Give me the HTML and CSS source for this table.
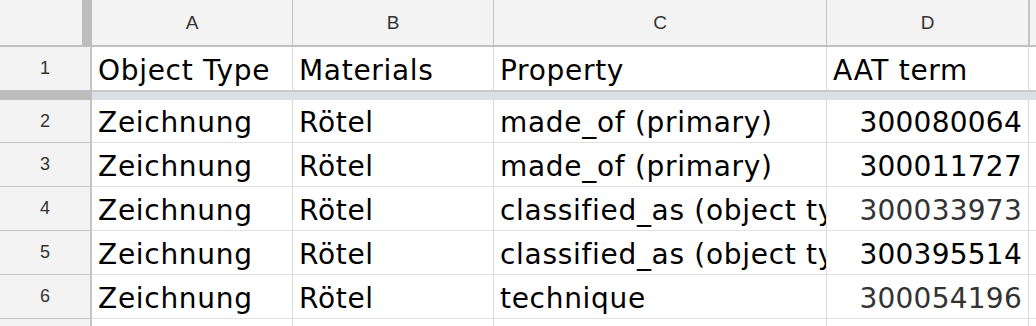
FILE: index.html
```html
<!DOCTYPE html>
<html>
<head>
<meta charset="utf-8">
<link rel="stylesheet" href="styles.css">
</head>
<body>
<div class="sheet">
  <div class="corner"></div>
  <div class="colhead">A</div>
  <div class="colhead">B</div>
  <div class="colhead">C</div>
  <div class="colhead">D</div>
  <div class="colhead colhead-rest"></div>

  <div class="rowhead rowhead-frozen">1</div>
  <div class="cell cell-frozen">Object Type</div>
  <div class="cell cell-frozen">Materials</div>
  <div class="cell cell-frozen">Property</div>
  <div class="cell cell-frozen">AAT term</div>
  <div class="cell cell-frozen cell-rest"></div>

  <div class="freeze-head"></div>
  <div class="freeze-bar"></div>

  <div class="rowhead">2</div>
  <div class="cell">Zeichnung</div>
  <div class="cell">Rötel</div>
  <div class="cell">made_of (primary)</div>
  <div class="cell num">300080064</div>
  <div class="cell cell-rest"></div>

  <div class="rowhead">3</div>
  <div class="cell">Zeichnung</div>
  <div class="cell">Rötel</div>
  <div class="cell">made_of (primary)</div>
  <div class="cell num">300011727</div>
  <div class="cell cell-rest"></div>

  <div class="rowhead">4</div>
  <div class="cell">Zeichnung</div>
  <div class="cell">Rötel</div>
  <div class="cell cell-clip"><span class="clip">classified_as (object type)</span></div>
  <div class="cell num num-muted">300033973</div>
  <div class="cell cell-rest"></div>

  <div class="rowhead">5</div>
  <div class="cell">Zeichnung</div>
  <div class="cell">Rötel</div>
  <div class="cell cell-clip"><span class="clip">classified_as (object type)</span></div>
  <div class="cell num">300395514</div>
  <div class="cell cell-rest"></div>

  <div class="rowhead">6</div>
  <div class="cell">Zeichnung</div>
  <div class="cell">Rötel</div>
  <div class="cell">technique</div>
  <div class="cell num num-muted">300054196</div>
  <div class="cell cell-rest"></div>

  <div class="rowhead"></div>
  <div class="cell"></div>
  <div class="cell"></div>
  <div class="cell"></div>
  <div class="cell"></div>
  <div class="cell cell-rest"></div>
</div>
</body>
</html>
```

FILE: styles.css
```css
html, body {
  margin: 0;
  padding: 0;
  background: #ffffff;
}

.sheet {
  width: 1036px;
  height: 326px;
  overflow: hidden;
  display: grid;
  grid-template-columns: 92px 201px 201px 333px 202px 1fr;
  grid-template-rows: 47px 43px 10px 43px 44px 44px 44px 44px 44px;
}

.sheet > div {
  box-sizing: border-box;
  min-width: 0;
}

.corner {
  background: #f3f3f3;
  border-right: 10px solid #bdbdbd;
  border-bottom: 2px solid #c0c0c0;
}

.colhead {
  background: #f3f3f3;
  border-right: 1px solid #c4c4c4;
  border-bottom: 2px solid #c0c0c0;
  display: flex;
  align-items: center;
  justify-content: center;
  font-family: "Liberation Sans", Arial, sans-serif;
  font-size: 19px;
  color: #333333;
}

.colhead-rest {
  border-right: none;
  border-left: 1px solid #c4c4c4;
}

.rowhead {
  background: #f3f3f3;
  border-right: 2px solid #c4c4c4;
  border-bottom: 1px solid #c4c4c4;
  display: flex;
  align-items: center;
  justify-content: center;
  font-family: "Liberation Sans", Arial, sans-serif;
  font-size: 18px;
  color: #333333;
}

.rowhead-frozen {
  border-bottom: none;
}

.cell {
  display: flex;
  align-items: flex-end;
  padding: 0 6px 3px 6px;
  border-right: 1px solid #dadada;
  border-bottom: 1px solid #e2e2e2;
  font-family: "DejaVu Sans", Verdana, sans-serif;
  font-size: 28px;
  letter-spacing: 0.7px;
  line-height: 33px;
  color: #000000;
  white-space: nowrap;
  overflow: hidden;
}

.cell-clip {
  padding-right: 0;
}

.clip {
  display: block;
  min-width: 0;
  flex: 1 1 auto;
  overflow: hidden;
  white-space: nowrap;
}

.cell-frozen {
  border-bottom: none;
}

.cell-rest {
  border-right: none;
}

.num {
  justify-content: flex-end;
  padding-right: 6px;
  letter-spacing: 0.25px;
}

.num-muted {
  color: #333333;
}

.freeze-head {
  background: #bdbdbd;
}

.freeze-bar {
  grid-column: 2 / -1;
  background: #dbe0e7;
  border-top: 2px solid #cacaca;
}
```
